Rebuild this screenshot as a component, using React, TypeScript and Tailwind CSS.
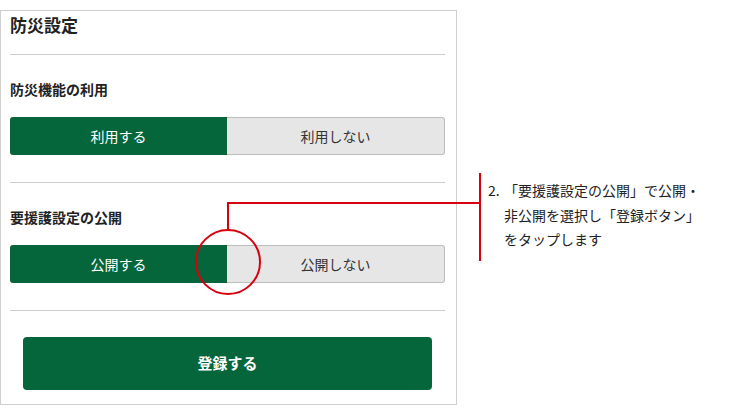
const FONT = "font-['Noto_Sans_CJK_JP','Noto_Sans',sans-serif]";
const RED = "#d7000f";

function Toggle({ on, off }: { on: string; off: string }) {
  return (
    <div className="flex h-full text-[14px]">
      <div className="flex flex-1 items-center justify-center rounded-l-[3px] bg-[#04663a] text-white">
        {on}
      </div>
      <div className="flex flex-1 items-center justify-center rounded-r-[3px] border border-l-0 border-[#bdbdbd] bg-[#e6e6e6] text-[#333]">
        {off}
      </div>
    </div>
  );
}

function Section({ title, on, off, h }: { title: string; on: string; off: string; h: string }) {
  return (
    <section className="flex flex-col gap-[18px] border-t border-[#cccccc] pb-[27px] pt-[24px]">
      <h2 className="text-[14px] font-bold leading-[20px] text-[#222]">{title}</h2>
      <div className={h}>
        <Toggle on={on} off={off} />
      </div>
    </section>
  );
}

export default function App() {
  return (
    <div className={`relative h-[415px] w-[750px] overflow-hidden bg-white pt-[10px] ${FONT}`}>
      <div className="flex h-[395px] w-[457px] flex-col border border-[#cfcfcf] pl-[9px] pr-[11px]">
        <h1 className="pb-[15px] text-[17px] font-bold leading-[28px] text-[#222]">防災設定</h1>
        <Section title="防災機能の利用" on="利用する" off="利用しない" h="h-[38px]" />
        <Section title="要援護設定の公開" on="公開する" off="公開しない" h="h-[38px]" />
        <div className="border-t border-[#cccccc] px-[13px] pt-[26px]">
          <button className="flex h-[53px] w-full items-center justify-center rounded-[4px] bg-[#04663a] text-[15px] font-bold text-white">
            登録する
          </button>
        </div>
      </div>

      {/* callout: circle + leader line */}
      <svg className="absolute left-0 top-0" width="750" height="415">
        <circle cx="228" cy="262" r="32" fill="none" stroke={RED} strokeWidth="2" />
        <polyline points="228,230 228,203 480,203" fill="none" stroke={RED} strokeWidth="2" />
      </svg>

      {/* callout text */}
      <div className="absolute left-[479px] top-[173px] flex">
        <div className="h-[88px] w-[2px] bg-[#d7000f]" />
        <div className="flex pl-[7px] pt-[5px] text-[14px] leading-[24.5px] text-[#222]">
          <span className="w-[16px]">2.</span>
          <p>
            「要援護設定の公開」で公開・
            <br />
            非公開を選択し「登録ボタン」
            <br />
            をタップします
          </p>
        </div>
      </div>
    </div>
  );
}
